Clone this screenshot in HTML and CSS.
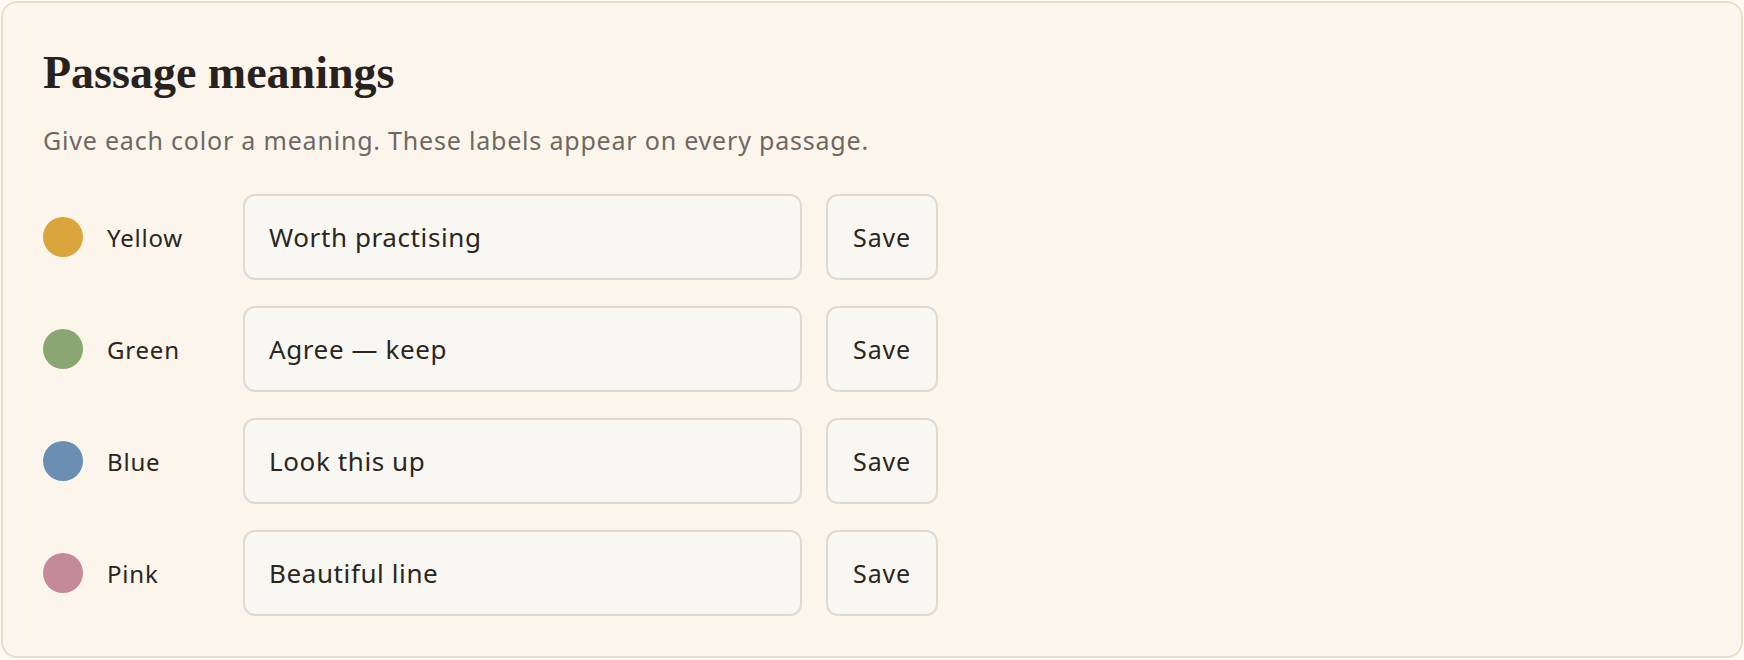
FILE: index.html
```html
<!DOCTYPE html>
<html lang="en">

<head>
    <meta charset="UTF-8">
    <meta name="viewport" content="width=device-width, initial-scale=1.0">
    <title>Passage meanings</title>
    <link rel="stylesheet" href="styles.css">
</head>

<body>
    <div class="card">
        <h1>Passage meanings</h1>
        <p class="lead">Give each color a meaning. These labels appear on every passage.</p>

        <!-- One row per highlight color -->
        <div class="meanings">
            <span class="dot dot-yellow"></span>
            <span class="color-name">Yellow</span>
            <input class="meaning-input" type="text" value="Worth practising">
            <button class="save-btn">Save</button>

            <span class="dot dot-green"></span>
            <span class="color-name">Green</span>
            <input class="meaning-input" type="text" value="Agree — keep">
            <button class="save-btn">Save</button>

            <span class="dot dot-blue"></span>
            <span class="color-name">Blue</span>
            <input class="meaning-input" type="text" value="Look this up">
            <button class="save-btn">Save</button>

            <span class="dot dot-pink"></span>
            <span class="color-name">Pink</span>
            <input class="meaning-input" type="text" value="Beautiful line">
            <button class="save-btn">Save</button>
        </div>
    </div>
</body>

</html>
```

FILE: styles.css
```css
body {
    font-family: "Noto Sans", Arial, sans-serif;
    background-color: #fdfaf3;
    margin: 0;
    padding: 1px;
    color: #2a2622;
}

.card {
    height: 657px;
    box-sizing: border-box;
    background-color: #fcf5eb;
    border: 2px solid #e5e1c9;
    border-radius: 16px;
    padding: 42px 40px 40px 40px;
}

h1 {
    font-family: "Liberation Serif", "DejaVu Serif", serif;
    font-size: 46px;
    line-height: 56px;
    font-weight: bold;
    margin: 0;
    color: #27221d;
}

.lead {
    font-size: 25px;
    line-height: 34px;
    letter-spacing: 0.8px;
    color: #6e6862;
    margin: 22px 0 37px 0;
}

.meanings {
    display: grid;
    grid-template-columns: 40px 112px 559px 112px;
    grid-auto-rows: 86px;
    column-gap: 24px;
    row-gap: 26px;
    align-items: center;
}

.dot {
    width: 40px;
    height: 40px;
    border-radius: 50%;
}

.dot-yellow { background-color: #dba53d; }
.dot-green { background-color: #89a673; }
.dot-blue { background-color: #6a8fb3; }
.dot-pink { background-color: #c48a9b; }

.color-name {
    font-size: 24px;
    letter-spacing: 0.8px;
    color: #2a2622;
}

.meaning-input {
    height: 86px;
    box-sizing: border-box;
    padding: 0 24px;
    font-family: "Noto Sans", Arial, sans-serif;
    font-size: 26px;
    letter-spacing: 0.6px;
    color: #2a2622;
    background-color: #f9f7f2;
    border: 2px solid #dedad1;
    border-radius: 12px;
    outline: none;
}

.save-btn {
    height: 86px;
    width: 112px;
    font-family: "Noto Sans", Arial, sans-serif;
    font-size: 25px;
    letter-spacing: 0.8px;
    color: #2a2622;
    background-color: #f9f7f2;
    border: 2px solid #dedad1;
    border-radius: 12px;
    cursor: pointer;
}
```
